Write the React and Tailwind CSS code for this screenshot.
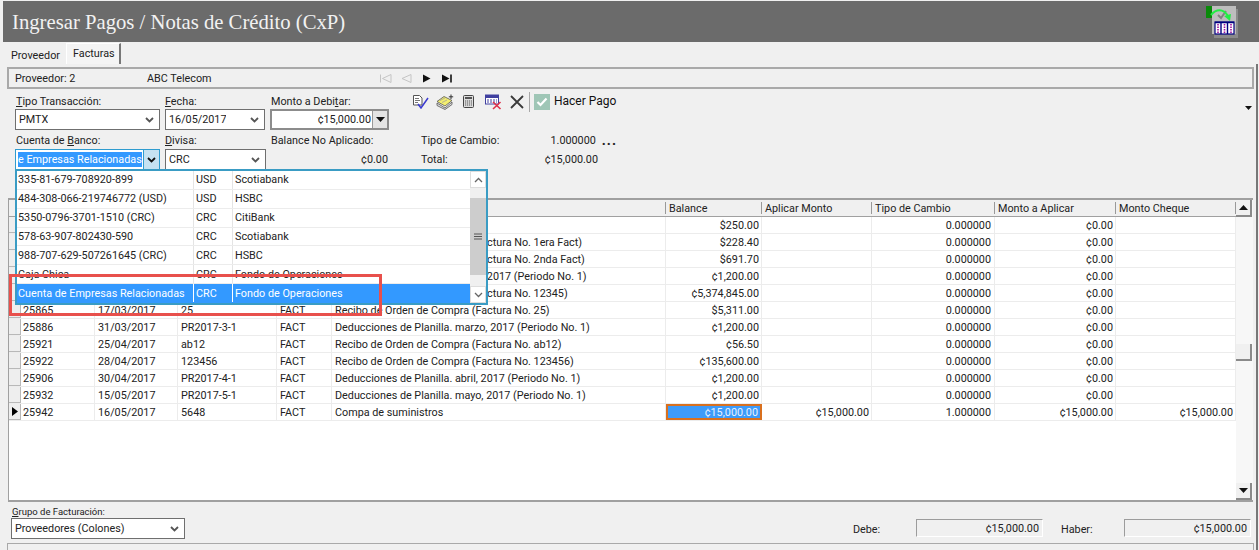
const font = { fontFamily: 'Roboto, "Liberation Sans", Arial, sans-serif' };

const rows = [
  ['', '', '', '', '', '$250.00', '', '0.000000', '¢0.00', ''],
  ['', '', '', '', 'Recibo de Orden de Compra (Factura No. 1era Fact)', '$228.40', '', '0.000000', '¢0.00', ''],
  ['', '', '', '', 'Recibo de Orden de Compra (Factura No. 2nda Fact)', '$691.70', '', '0.000000', '¢0.00', ''],
  ['', '', '', '', 'Deducciones de Planilla. enero, 2017 (Periodo No. 1)', '¢1,200.00', '', '0.000000', '¢0.00', ''],
  ['', '', '', '', 'Recibo de Orden de Compra (Factura No. 12345)', '¢5,374,845.00', '', '0.000000', '¢0.00', ''],
  ['25865', '17/03/2017', '25', 'FACT', 'Recibo de Orden de Compra (Factura No. 25)', '$5,311.00', '', '0.000000', '¢0.00', ''],
  ['25886', '31/03/2017', 'PR2017-3-1', 'FACT', 'Deducciones de Planilla. marzo, 2017 (Periodo No. 1)', '¢1,200.00', '', '0.000000', '¢0.00', ''],
  ['25921', '25/04/2017', 'ab12', 'FACT', 'Recibo de Orden de Compra (Factura No. ab12)', '¢56.50', '', '0.000000', '¢0.00', ''],
  ['25922', '28/04/2017', '123456', 'FACT', 'Recibo de Orden de Compra (Factura No. 123456)', '¢135,600.00', '', '0.000000', '¢0.00', ''],
  ['25906', '30/04/2017', 'PR2017-4-1', 'FACT', 'Deducciones de Planilla. abril, 2017 (Periodo No. 1)', '¢1,200.00', '', '0.000000', '¢0.00', ''],
  ['25932', '15/05/2017', 'PR2017-5-1', 'FACT', 'Deducciones de Planilla. mayo, 2017 (Periodo No. 1)', '¢1,200.00', '', '0.000000', '¢0.00', ''],
  ['25942', '16/05/2017', '5648', 'FACT', 'Compa de suministros', '¢15,000.00', '¢15,000.00', '1.000000', '¢15,000.00', '¢15,000.00'],
];

const colClasses = [
  'w-[74px] pl-[2px]',
  'w-[83px] pl-[3px]',
  'w-[99px] pl-[3px]',
  'w-[55px] pl-[3px]',
  'w-[334px] pl-[3px]',
  'w-[96px] pr-[2px] text-right',
  'w-[110px] pr-[2px] text-right',
  'w-[123px] pr-[3px] text-right',
  'w-[121px] pr-[2px] text-right',
  'w-[120px] pr-[2px] text-right',
];

const headers = [
  ['', 'w-[74px]'], ['', 'w-[83px]'], ['', 'w-[99px]'], ['', 'w-[55px]'], ['', 'w-[334px]'],
  ['Balance', 'w-[96px]'], ['Aplicar Monto', 'w-[110px]'], ['Tipo de Cambio', 'w-[123px]'],
  ['Monto a Aplicar', 'w-[121px]'], ['Monto Cheque', 'w-[120px]'],
];

const dropdown = [
  ['335-81-679-708920-899', 'USD', 'Scotiabank'],
  ['484-308-066-219746772 (USD)', 'USD', 'HSBC'],
  ['5350-0796-3701-1510 (CRC)', 'CRC', 'CitiBank'],
  ['578-63-907-802430-590', 'CRC', 'Scotiabank'],
  ['988-707-629-507261645 (CRC)', 'CRC', 'HSBC'],
  ['Caja Chica', 'CRC', 'Fondo de Operaciones'],
  ['Cuenta de Empresas Relacionadas', 'CRC', 'Fondo de Operaciones'],
];

function Chevron({ color = '#555' }) {
  return (
    <svg width="9" height="6" viewBox="0 0 9 6" className="shrink-0">
      <path d="M1 1 L4.5 4.5 L8 1" fill="none" stroke={color} strokeWidth="1.8" />
    </svg>
  );
}

function Select({ value, className = '' }) {
  return (
    <div className={`h-[21px] border border-[#6f6f6f] bg-white flex items-center pl-[3px] pr-[5px] justify-between ${className}`}>
      <span className="truncate">{value}</span>
      <Chevron />
    </div>
  );
}

function Tri({ up = false }) {
  return (
    <svg width="9" height="5" viewBox="0 0 9 5">
      <path d={up ? 'M4.5 0 L9 5 L0 5 Z' : 'M0 0 L9 0 L4.5 5 Z'} fill="#111" />
    </svg>
  );
}

function ScrollBtn({ up }) {
  return (
    <div className="h-[17px] w-[16px] shrink-0 bg-[#f0f0f0] border-r-2 border-b-2 border-[#8a8a8a] flex items-center justify-center">
      <Tri up={up} />
    </div>
  );
}

function NavIcons() {
  return (
    <div className="flex items-center gap-[8px] ml-[132px]">
      <svg width="13" height="9" viewBox="0 0 13 9"><path d="M1.5 0.5V8.5M12 0.5L3.5 4.5L12 8.5Z" fill="none" stroke="#c4c4c4" /></svg>
      <svg width="12" height="9" viewBox="0 0 12 9"><path d="M11 0.5L2 4.5L11 8.5Z" fill="none" stroke="#c4c4c4" /></svg>
      <svg width="12" height="9" viewBox="0 0 12 9" className="ml-[1px]"><path d="M2 0.5L9.5 4.5L2 8.5Z" fill="#111" /></svg>
      <svg width="12" height="9" viewBox="0 0 12 9"><path d="M1 0.5L8.5 4.5L1 8.5Z" fill="#111" /><path d="M10 0.5V8.5" stroke="#111" strokeWidth="1.6" /></svg>
    </div>
  );
}

function Toolbar() {
  return (
    <div className="flex items-center h-[21px]">
      <svg width="17" height="15" viewBox="0 0 17 15" className="mr-[7px]">
        <path d="M1.5 1.5H7.5L10 4V11H1.5Z" fill="#fff" stroke="#555" />
        <path d="M3 4.5H7M3 6.5H8M3 8.5H6" stroke="#777" />
        <path d="M6 10L9 14L16 4" fill="none" stroke="#3a3ad0" strokeWidth="1.5" />
      </svg>
      <svg width="18" height="16" viewBox="0 0 18 16" className="mr-[9px]">
        <path d="M1 9L9 14L16 8V10.5L9 15.5L1 11.5Z" fill="#ddd" stroke="#555" strokeWidth="0.8" />
        <path d="M1 7.5L9 12L16 6.5L8 2.5Z" fill="#f3ee70" stroke="#555" strokeWidth="0.8" />
        <path d="M4 6.5L9 4M6 8.5L11 6" stroke="#999" strokeWidth="0.7" />
        <path d="M15 0.5V5M12.8 2.8H17.2" stroke="#333" strokeWidth="1" />
      </svg>
      <svg width="11" height="13" viewBox="0 0 11 13" className="mr-[11px]">
        <rect x="0.5" y="0.5" width="10" height="12" rx="1" fill="#ddd" stroke="#444" />
        <rect x="2" y="2" width="7" height="2" fill="#555" />
        <path d="M2 6H9M2 8H9M2 10H9" stroke="#555" strokeDasharray="1.2 0.8" />
      </svg>
      <svg width="17" height="16" viewBox="0 0 17 16" className="mr-[8px]">
        <rect x="0.5" y="1" width="13" height="9" fill="#fff" stroke="#4040a0" />
        <rect x="0.5" y="1" width="13" height="3" fill="#4040a0" />
        <path d="M2 6H12M2 8H12" stroke="#4040a0" strokeDasharray="2 1" />
        <path d="M8 8L15.5 15M15.5 8L8 15" stroke="#e0304a" strokeWidth="1.6" />
      </svg>
      <svg width="14" height="14" viewBox="0 0 14 14" className="mr-[5px]">
        <path d="M1 1L13 13M13 1L1 13" stroke="#3a3a3a" strokeWidth="1.8" />
      </svg>
      <div className="w-[1px] h-[20px] bg-[#a8a8a8] mr-[4px]" />
      <div className="w-[16px] h-[16px] bg-[#9fc6b6] flex items-center justify-center mr-[4px]">
        <svg width="12" height="10" viewBox="0 0 12 10"><path d="M1.5 5L4.5 8L10.5 1.5" fill="none" stroke="#fff" strokeWidth="2.2" /></svg>
      </div>
      <span className="text-[12px] text-[#111] whitespace-nowrap">Hacer Pago</span>
    </div>
  );
}

export default function App() {
  return (
    <div style={font} className="relative w-[1259px] h-[550px] overflow-hidden bg-[#f0f0f0] text-[10.8px] text-[#222] leading-[13px] flex flex-col">
      {/* Title */}
      <div className="h-[41px] mt-[1px] ml-[3px] bg-[#6b6b6b] flex items-center pl-[9px] shrink-0">
        <span style={{ fontFamily: '"Liberation Serif", serif' }} className="text-[20.7px] leading-[24px] text-[#f2f2f2]">
          Ingresar Pagos / Notas de Crédito (CxP)
        </span>
        <svg width="32" height="32" viewBox="0 0 32 32" className="ml-auto mr-[21px] mt-[1px]">
          <rect x="8" y="3" width="24" height="29" fill="#8a8a8a" />
          <rect x="0" y="0" width="12" height="12" fill="#0a8a0a" />
          <rect x="6" y="0" width="24" height="28" fill="#bdbdbd" />
          <path d="M12 9L15 12L20 5" fill="none" stroke="#808080" strokeWidth="2" />
          <rect x="9" y="16" width="19" height="12" fill="#fff" stroke="#000080" strokeWidth="1.2" />
          <path d="M9 16.5H28M15 16V28M21.5 16V28" stroke="#000080" strokeWidth="1.4" />
          <path d="M12 18V27M18.5 18V27M25 18V27" stroke="#a0109a" strokeWidth="1.6" strokeDasharray="1.5 1" />
          <path d="M5 9C10 3 17 2 22 10" fill="none" stroke="#22ee44" strokeWidth="2" />
          <path d="M18 10L24 15L25 8Z" fill="#22ee44" />
        </svg>
      </div>

      {/* Tabs */}
      <div className="h-[22px] flex items-end pl-[6px] shrink-0">
        <div className="w-[60px] h-[19px] pl-[5px] pt-[2px] flex items-center">Proveedor</div>
        <div className="w-[55px] h-[21px] pl-[6px] pb-[2px] flex items-center bg-[#f4f4f4] border-l border-t border-white border-r-2 border-r-[#777]">Facturas</div>
      </div>

      {/* Main panel */}
      <div className="flex-1 ml-[7px] mr-[1px] border-r-2 border-r-[#777] flex flex-col min-h-0">
        {/* Supplier bar */}
        <div className="h-[22px] mt-[3px] mr-[2px] border-2 border-[#a9a9a9] flex items-center pl-[6px] pt-[1px] shrink-0">
          <span className="w-[132px]">Proveedor: 2</span>
          <span className="w-[100px]">ABC Telecom</span>
          <NavIcons />
        </div>

        {/* Form */}
        <div className="h-[109px] flex pl-[8px] pt-[6px] shrink-0 relative">
          <div className="w-[145px] mr-[5px] flex flex-col">
            <label className="h-[12px] mb-[2px] pl-[1px]"><u>T</u>ipo Transacción:</label>
            <Select value="PMTX" />
            <label className="h-[12px] mt-[4px] mb-[3px] pl-[1px]">Cuenta de <u>B</u>anco:</label>
            <div className="h-[21px] border border-[#2f9ccf] bg-white flex">
              <div className="flex-1 flex items-center pl-[2px] min-w-0 overflow-hidden">
                <span className="bg-[#3399ff] text-white whitespace-nowrap leading-[15px]">e Empresas Relacionadas</span>
              </div>
              <div className="w-[16px] shrink-0 bg-[#c6e2f2] border-l border-[#2f9ccf] flex items-center justify-center"><Chevron color="#111" /></div>
            </div>
          </div>
          <div className="w-[101px] mr-[4px] flex flex-col">
            <label className="h-[12px] mb-[2px]"><u>F</u>echa:</label>
            <Select value="16/05/2017" className="w-[100px]" />
            <label className="h-[12px] mt-[4px] mb-[3px]"><u>D</u>ivisa:</label>
            <Select value="CRC" />
          </div>
          <div className="w-[119px] mr-[23px] flex flex-col">
            <label className="h-[12px] mb-[2px] pl-[1px]">Monto a Debi<u>t</u>ar:</label>
            <div className="h-[21px] flex border-2 border-[#8c8c8c] bg-white">
              <span className="flex-1 text-right pt-[2px] pr-[1px]">¢15,000.00</span>
              <div className="w-[15px] bg-[#e4e4e4] border-l border-[#999] flex items-center justify-center"><Tri /></div>
            </div>
            <label className="h-[12px] mt-[4px] pl-[1px]">Balance No Aplicado:</label>
            <div className="text-right mt-[7px] pr-[1px]">¢0.00</div>
          </div>
          <div className="w-[205px] flex flex-col">
            <div className="-mt-[4px]"><Toolbar /></div>
            <div className="flex mt-[22px] pl-[9px] items-center">
              <span className="w-[100px]">Tipo de Cambio:</span>
              <span className="w-[77px] text-right">1.000000</span>
              <span className="ml-[6px] font-bold text-[14px] leading-[11px] tracking-[1px]">...</span>
            </div>
            <div className="flex mt-[6px] pl-[9px]">
              <span className="w-[100px]">Total:</span>
              <span className="w-[77px] text-right">¢15,000.00</span>
            </div>
          </div>
          <div className="absolute right-[4px] top-[17px]">
            <svg width="7" height="4" viewBox="0 0 7 4"><path d="M0 0H7L3.5 4Z" fill="#111" /></svg>
          </div>
        </div>

        {/* Grid */}
        <div className="h-[304px] ml-[1px] mr-[3px] border-y-2 border-l border-[#a0a0a0] bg-white flex shrink-0">
          <div className="flex-1 flex flex-col min-w-0">
            <div className="h-[17px] bg-[#f0f0f0] flex shrink-0 border-b border-[#a0a0a0]">
              <div className="w-[12px] shrink-0" />
              {headers.map(([t, w], i) => (
                <div key={i} className={`${w} shrink-0 pl-[3px] flex items-center relative whitespace-nowrap`}>
                  {t}
                  <span className="absolute right-0 top-[2px] h-[12px] w-[1px] bg-[#999]" />
                </div>
              ))}
            </div>
            {rows.map((r, i) => {
              const last = i === rows.length - 1;
              return (
                <div key={i} className="h-[17px] flex shrink-0 border-b border-[#ececec]">
                  <div className="w-[12px] shrink-0 bg-[#eeeeee] border-r border-b border-[#b8b8b8] flex items-center justify-center">
                    {last && <svg width="6" height="9" viewBox="0 0 6 9"><path d="M0 0L6 4.5L0 9Z" fill="#000" /></svg>}
                  </div>
                  {r.map((c, j) => (
                    <div
                      key={j}
                      className={`${colClasses[j]} shrink-0 whitespace-nowrap overflow-hidden ${
                        last && j === 5
                          ? 'bg-[#3d9bfa] border-2 border-[#d9701e] text-[#eaf3ff] leading-[13px]'
                          : 'border-r border-[#ececec] leading-[17px]'
                      }`}
                    >
                      {c}
                    </div>
                  ))}
                </div>
              );
            })}
          </div>
          <div className="w-[17px] shrink-0 bg-[#f7f7f7] flex flex-col">
            <ScrollBtn up />
            <div className="h-[127px]" />
            <div className="h-[17px] w-[16px] bg-[#f0f0f0] border-r-2 border-b-2 border-[#8a8a8a]" />
            <div className="flex-1" />
            <ScrollBtn />
          </div>
        </div>

        {/* Footer */}
        <div className="flex-1 relative flex flex-col min-h-0">
          <div className="flex items-end h-[37px] pl-[4px]">
            <div className="w-[174px] mr-[668px]">
              <div className="text-[9.5px] leading-[11px] mb-[1px] pl-[1px] whitespace-nowrap"><u>G</u>rupo de Facturación:</div>
              <Select value="Proveedores (Colones)" className="w-[174px]" />
            </div>
            <div className="flex items-center h-[21px]">
              <span className="w-[63px] pt-[1px]">Debe:</span>
              <div className="w-[127px] h-[18px] self-start mt-[1px] border-l border-t border-[#9c9c9c] border-r border-r-white border-b border-b-white text-right pr-[3px] leading-[17px]">¢15,000.00</div>
              <span className="w-[63px] ml-[18px] pt-[1px]">Haber:</span>
              <div className="w-[127px] h-[18px] self-start mt-[1px] border-l border-t border-[#9c9c9c] border-r border-r-white border-b border-b-white text-right pr-[3px] leading-[17px]">¢15,000.00</div>
            </div>
          </div>
          <div className="flex-1 mt-[4px] border-t border-x border-[#a9a9a9] mr-[2px]" />
        </div>
      </div>

      {/* Combo list overlay */}
      <div className="absolute left-[15px] top-[169px] w-[473px] h-[136px] border-2 border-[#3a9cc4] bg-white flex">
        <div className="flex-1 flex flex-col min-w-0">
          {dropdown.map((d, i) => {
            const sel = i === dropdown.length - 1;
            return (
              <div key={i} className={`h-[19px] flex items-center border-b ${sel ? 'bg-[#3399ff] text-white border-[#3399ff]' : 'border-[#ececec]'}`}>
                <div className={`w-[177px] pl-[1px] border-r h-full flex items-center whitespace-nowrap ${sel ? 'border-white' : 'border-[#e4e4e4]'}`}>{d[0]}</div>
                <div className={`w-[39px] pl-[2px] border-r h-full flex items-center ${sel ? 'border-white' : 'border-[#e4e4e4]'}`}>{d[1]}</div>
                <div className="pl-[2px]">{d[2]}</div>
              </div>
            );
          })}
        </div>
        <div className="w-[16px] shrink-0 bg-[#f0f0f0] flex flex-col">
          <div className="h-[17px] flex items-center justify-center bg-white border border-[#ddd]">
            <svg width="9" height="6" viewBox="0 0 9 6"><path d="M1 5L4.5 1.5L8 5" fill="none" stroke="#666" strokeWidth="1.3" /></svg>
          </div>
          <div className="h-[10px]" />
          <div className="h-[77px] bg-[#cdcdcd] flex items-center justify-center">
            <svg width="8" height="7" viewBox="0 0 8 7"><path d="M0 1H8M0 3.5H8M0 6H8" stroke="#555" strokeWidth="1" /></svg>
          </div>
          <div className="flex-1" />
          <div className="h-[17px] flex items-center justify-center bg-white border border-[#ddd]">
            <svg width="9" height="6" viewBox="0 0 9 6"><path d="M1 1L4.5 4.5L8 1" fill="none" stroke="#666" strokeWidth="1.3" /></svg>
          </div>
        </div>
      </div>

      {/* Red annotation */}
      <div className="absolute left-[9px] top-[274px] w-[373px] h-[42px] border-[3px] border-[#e8504c] pointer-events-none" />
    </div>
  );
}
